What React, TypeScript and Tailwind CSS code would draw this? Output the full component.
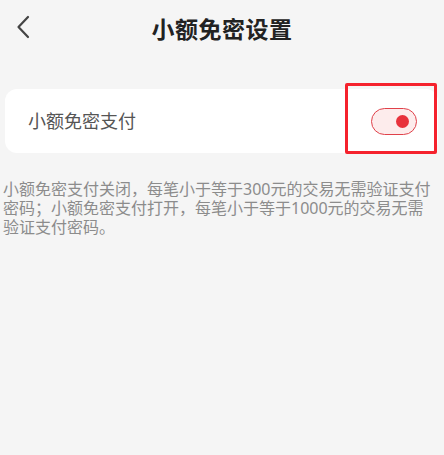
import { useState } from "react";

const font = {
  fontFamily: '"Noto Sans", "Noto Sans CJK SC", sans-serif',
};

const notes = [
  "小额免密支付关闭，每笔小于等于300元的交易无需验证支付",
  "密码；小额免密支付打开，每笔小于等于1000元的交易无需",
  "验证支付密码。",
];

export default function App() {
  const [enabled, setEnabled] = useState(true);

  return (
    <div
      className="w-[444px] h-[455px] bg-[#f5f5f5] flex flex-col overflow-hidden"
      style={font}
    >
      {/* Header */}
      <div className="relative h-[56px] flex items-center justify-center">
        <button className="absolute left-[12px] top-[13px] w-[22px] h-[28px] flex items-center justify-center">
          <svg width="16" height="24" viewBox="0 0 16 24" fill="none">
            <path
              d="M13 2 L3.5 12 L13 22"
              stroke="#444"
              strokeWidth="2.2"
              strokeLinecap="round"
              strokeLinejoin="round"
            />
          </svg>
        </button>
        <h1 className="text-[23px] font-bold text-[#222] tracking-[0.5px] mt-[2px]">
          小额免密设置
        </h1>
      </div>

      {/* Setting card */}
      <div className="relative mt-[33px] mx-[5px] mr-[6px] h-[64px] bg-white rounded-[12px] flex items-center justify-between pl-[23px] pr-[21px]">
        <span className="text-[18px] text-[#555]">小额免密支付</span>
        <button
          onClick={() => setEnabled(!enabled)}
          className="w-[46px] h-[27px] rounded-full border-[1.5px] border-[#e0414a] bg-[#fdecec] flex items-center justify-end pr-[7px]"
        >
          <span className="w-[13px] h-[13px] rounded-full bg-[#e8323c]" />
        </button>
        {/* Annotation box */}
        <div className="absolute right-[1px] top-[-6px] w-[92px] h-[71px] border-[3px] border-[#f5222d] rounded-[2px]" />
      </div>

      {/* Description */}
      <div className="mt-[27px] px-[3px] flex flex-col text-[16px] text-[#8c8c8c]">
        {notes.map((line) => (
          <div key={line} className="h-[19px] leading-[19px] whitespace-nowrap">
            {line}
          </div>
        ))}
      </div>
    </div>
  );
}
